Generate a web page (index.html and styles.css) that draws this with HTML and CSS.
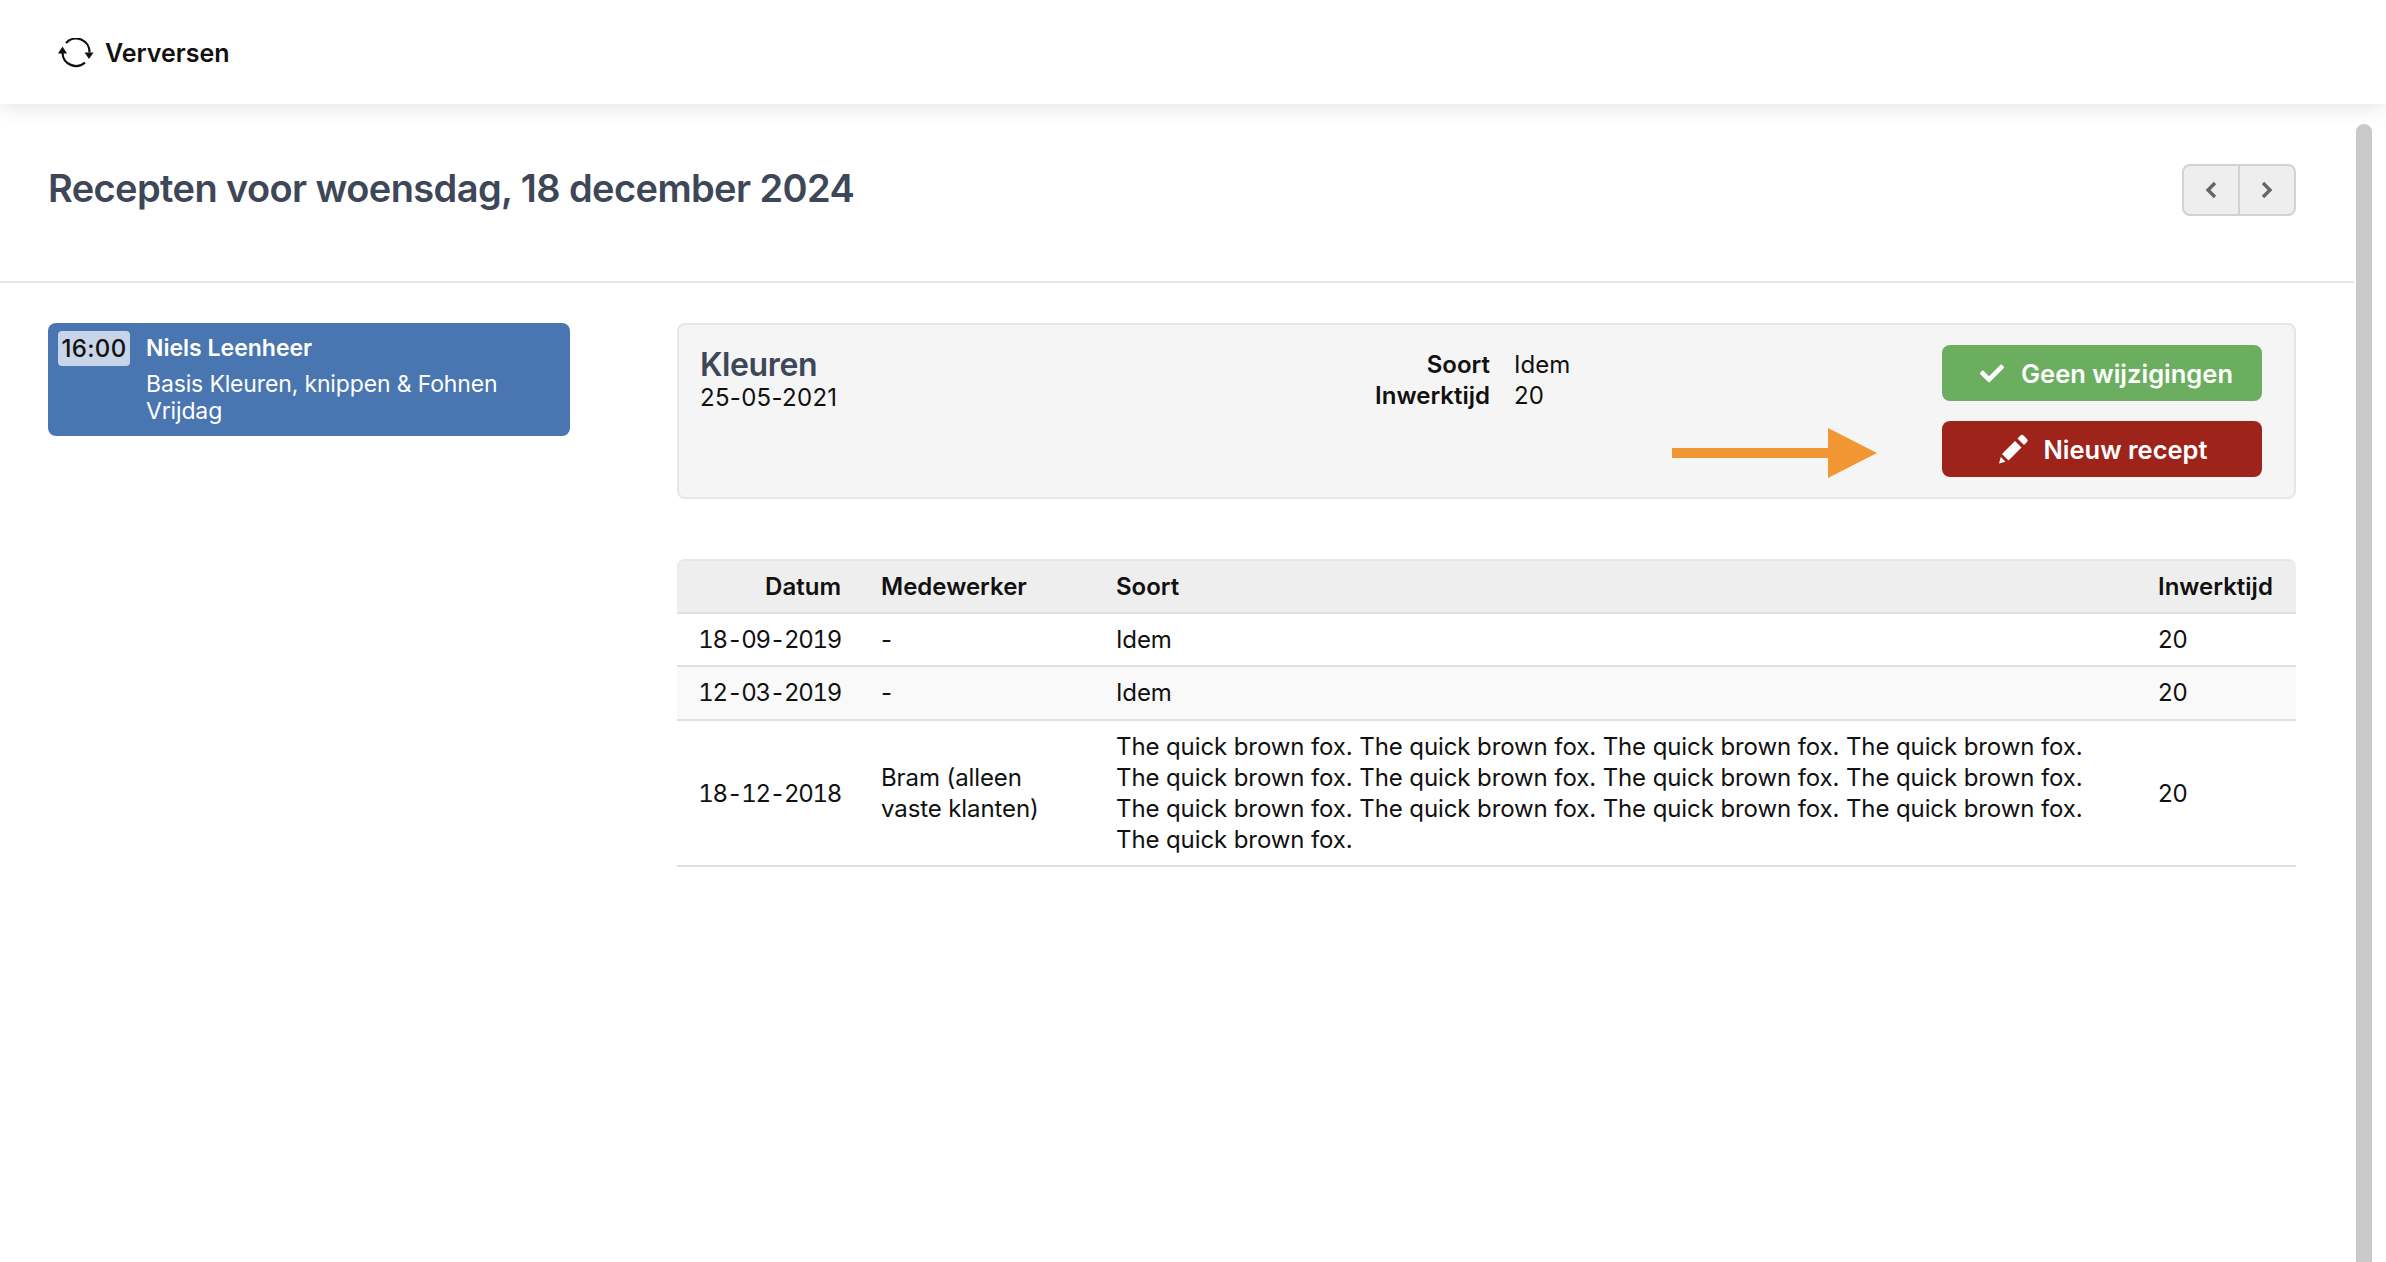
FILE: index.html
```html
<!DOCTYPE html>
<html lang="nl">
<head>
  <meta charset="UTF-8">
  <title>Recepten</title>
  <link rel="stylesheet" href="styles.css">
</head>
<body>
<!-- toolbar -->
<header class="toolbar">
  <button class="refresh">
    <svg width="36" height="30" viewBox="0 0 36 30">
      <path d="M8 5A13.5 13.5 0 0 1 31.5 14.5" fill="none" stroke="#111" stroke-width="2.2"></path>
      <path d="M4.5 15A13.5 13.5 0 0 0 27 24.5" fill="none" stroke="#111" stroke-width="2.2"></path>
      <path d="M0 15.5h9L4.5 8.5z" fill="#111"></path>
      <path d="M26.5 14.5h9L31 21z" fill="#111"></path>
    </svg>
    Verversen
  </button>
</header>

<div class="page">
  <main class="content">
    <div class="pageHeader">
      <h1>Recepten voor woensdag, 18 december 2024</h1>
      <div class="pager">
        <button class="pagerBtn">
          <svg width="14" height="20" viewBox="0 0 14 20"><path d="M11 3L4 10l7 7" fill="none" stroke="#666" stroke-width="3.4"></path></svg>
        </button>
        <button class="pagerBtn">
          <svg width="14" height="20" viewBox="0 0 14 20"><path d="M3 3l7 7-7 7" fill="none" stroke="#666" stroke-width="3.4"></path></svg>
        </button>
      </div>
    </div>

    <div class="columns">
      <!-- afspraken -->
      <aside class="sidebar">
        <div class="appointment">
          <span class="time">16:00</span>
          <div class="appointmentText">
            <strong>Niels Leenheer</strong>
            <p>Basis Kleuren, knippen &amp; Fohnen<br>Vrijdag</p>
          </div>
        </div>
      </aside>

      <section class="details">
        <div class="panel">
          <div class="panelTitle">
            <h2>Kleuren</h2>
            <div class="panelDate">25-05-2021</div>
          </div>
          <dl class="facts">
            <dt>Soort</dt><dd>Idem</dd>
            <dt>Inwerktijd</dt><dd>20</dd>
          </dl>
          <div class="actions">
            <button class="btn btnGreen">
              <svg width="24" height="19" viewBox="0 60 512 392"><path d="M173.9 439.4L7.5 273c-10-10-10-26.2 0-36.2l36.2-36.2c10-10 26.2-10 36.2 0L192 312.7 432.1 72.6c10-10 26.2-10 36.2 0l36.2 36.2c10 10 10 26.2 0 36.2L210.1 439.4c-10 10-26.2 10-36.2 0z" fill="#fff"></path></svg>
              Geen wijzigingen
            </button>
            <button class="btn btnRed">
              <svg width="30" height="30" viewBox="0 0 30 30">
                <path d="M3 20L16 7l6.5 6.5-13 13z" fill="#fff"></path>
                <path d="M18.5 4.500l3-3q1.500-1.500 3 0l3.500 3.500q1.500 1.500 0 3l-3 3z" fill="#fff"></path>
                <path d="M1.800 23l4.700 4.700L0 29.500z" fill="#fff"></path>
              </svg>
              Nieuw recept
            </button>
            <svg class="arrow" width="205" height="50" viewBox="0 0 205 50">
              <path d="M0 20h156V0l49 25-49 25V30H0z" fill="#f09733"></path>
            </svg>
          </div>
        </div>

        <table class="history">
          <thead>
            <tr>
              <th class="colDate">Datum</th>
              <th class="colName">Medewerker</th>
              <th class="colKind">Soort</th>
              <th class="colTime">Inwerktijd</th>
            </tr>
          </thead>
          <tbody>
            <tr>
              <td class="colDate">18-09-2019</td>
              <td>-</td>
              <td>Idem</td>
              <td>20</td>
            </tr>
            <tr class="striped">
              <td class="colDate">12-03-2019</td>
              <td>-</td>
              <td>Idem</td>
              <td>20</td>
            </tr>
            <tr>
              <td class="colDate">18-12-2018</td>
              <td>Bram (alleen vaste klanten)</td>
              <td>The quick brown fox. The quick brown fox. The quick brown fox. The quick brown fox. The quick brown fox. The quick brown fox. The quick brown fox. The quick brown fox. The quick brown fox. The quick brown fox. The quick brown fox. The quick brown fox. The quick brown fox.</td>
              <td>20</td>
            </tr>
          </tbody>
        </table>
      </section>
    </div>
  </main>

  <div class="scrollbar"><div class="thumb"></div></div>
</div>
</body>
</html>
```

FILE: styles.css
```css
* {
  box-sizing: border-box;
}
html, body {
  height: 100%;
}
body {
  margin: 0;
  overflow: hidden;
  display: flex;
  flex-direction: column;
  background: #fff;
  color: #111;
  font-family: Inter, 'Liberation Sans', sans-serif;
  font-size: 24px;
  line-height: 31px;
}
button {
  font: inherit;
  cursor: pointer;
}
h1, h2, p, dl, dd {
  margin: 0;
}

.toolbar {
  position: relative;
  flex: none;
  height: 104px;
  display: flex;
  align-items: center;
  padding: 2px 0 0 58px;
  background: #fff;
  box-shadow: 0 2px 20px rgba(0,0,0,.12);
}
.refresh {
  display: flex;
  align-items: center;
  gap: 11px;
  padding: 0;
  border: 0;
  background: none;
  color: #111;
  font-size: 25px;
  font-weight: 600;
}

.page {
  flex: 1;
  min-height: 0;
  display: flex;
}
.content {
  flex: 1;
}
.scrollbar {
  flex: none;
  width: 32px;
  padding: 20px 14px 0 2px;
  overflow: hidden;
}
.thumb {
  height: 1400px;
  border-radius: 8px;
  background: #c9c9c9;
}

.pageHeader {
  height: 179px;
  padding: 60px 58px 0 48px;
  display: flex;
  justify-content: space-between;
  align-items: flex-start;
  border-bottom: 2px solid #e6e6e6;
}
h1 {
  font-size: 38px;
  line-height: 48px;
  letter-spacing: -0.6px;
  font-weight: 600;
  color: #3d4757;
}
.pager {
  display: flex;
  width: 114px;
  height: 52px;
  border: 2px solid #d2d2d2;
  border-radius: 8px;
  background: #eee;
}
.pagerBtn {
  flex: 1;
  display: flex;
  align-items: center;
  justify-content: center;
  padding: 0;
  border: 0;
  background: none;
}
.pagerBtn + .pagerBtn {
  border-left: 2px solid #d2d2d2;
}

.columns {
  display: flex;
  gap: 107px;
  padding: 40px 58px 0 48px;
}
.sidebar {
  flex: none;
  width: 522px;
}
.appointment {
  display: flex;
  gap: 16px;
  padding: 8px 10px 11px;
  border-radius: 8px;
  background: #4975b0;
  color: #fff;
}
.time {
  flex: none;
  width: 72px;
  height: 35px;
  line-height: 35px;
  text-align: center;
  border-radius: 4px;
  background: #c8d5e8;
  color: #111;
  font-weight: 500;
  letter-spacing: 0.3px;
}
.appointmentText strong {
  display: block;
  margin-bottom: 5px;
  font-size: 23px;
  line-height: 35px;
  font-weight: 600;
}
.appointmentText p {
  font-size: 23px;
  line-height: 27px;
  letter-spacing: -0.15px;
}

.details {
  flex: 1;
  min-width: 0;
}
.panel {
  display: flex;
  height: 176px;
  padding: 20px 32px 0 21px;
  border: 2px solid #e6e6e6;
  border-radius: 8px;
  background: #f5f5f5;
}
.panelTitle {
  width: 500px;
  padding-top: 3px;
}
.panelDate {
  letter-spacing: 0.3px;
}
h2 {
  font-size: 32px;
  line-height: 34px;
  letter-spacing: -0.4px;
  font-weight: 600;
  color: #3d4757;
}
.facts {
  flex: 1;
  display: grid;
  grid-template-columns: 290px 1fr;
  column-gap: 24px;
  align-content: start;
  padding-top: 4px;
}
.facts dt {
  text-align: right;
  font-weight: 600;
}
.actions {
  position: relative;
  flex: none;
  width: 320px;
  display: flex;
  flex-direction: column;
  gap: 20px;
}
.btn {
  display: flex;
  align-items: center;
  justify-content: center;
  height: 56px;
  border: 0;
  border-radius: 8px;
  color: #fff;
  font-size: 25.5px;
  font-weight: 600;
}
.btnGreen {
  gap: 17px;
  padding: 0 0 0 9px;
  background: #6cae5f;
}
.btnRed {
  gap: 14px;
  padding: 0 0 0 3px;
  background: #9e241b;
}
.arrow {
  position: absolute;
  left: -270px;
  top: 83px;
}

.history {
  width: 100%;
  margin-top: 60px;
  border-collapse: separate;
  border-spacing: 0;
}
.history th, .history td {
  padding: 10px 20px;
  border-bottom: 2px solid #e0e0e0;
  text-align: left;
  vertical-align: middle;
}
.history td {
  letter-spacing: -0.1px;
}
.history th {
  border-top: 2px solid #e6e6e6;
  background: #eee;
  font-weight: 600;
}
.history th:first-child {
  border-top-left-radius: 8px;
}
.history th:last-child {
  border-top-right-radius: 8px;
}
.history .colDate {
  width: 184px;
  text-align: right;
  white-space: nowrap;
}
.history td.colDate {
  font-variant-numeric: tabular-nums;
  letter-spacing: -1.3px;
}
.colName {
  width: 235px;
}
.history .colTime {
  width: 158px;
  padding-right: 22px;
}
.striped td {
  padding-bottom: 11px;
  background: #f9f9f9;
}
```
